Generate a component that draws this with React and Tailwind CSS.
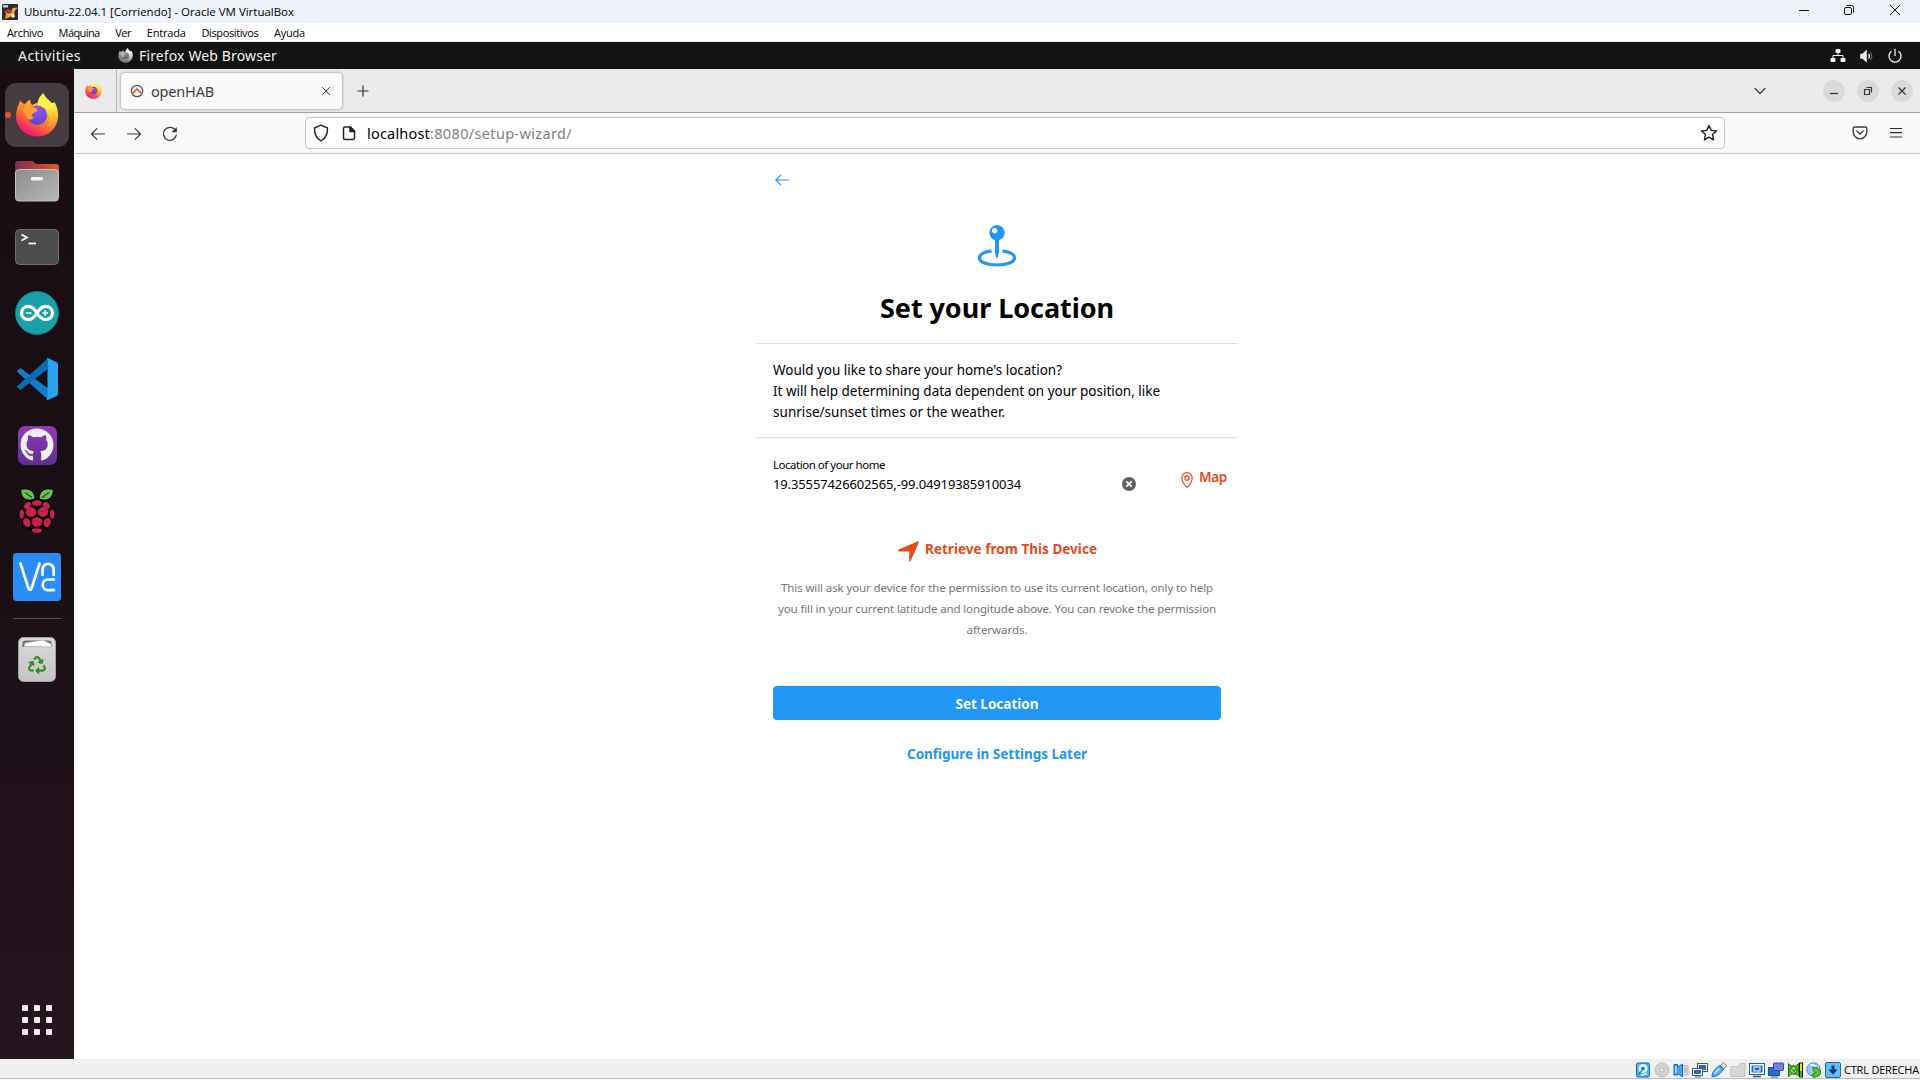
import { useLayoutEffect, useRef } from "react";
import { FaGithub, FaRecycle } from "react-icons/fa";

/* Single line of text whose tracking is adjusted so that it spans `w` pixels. */
function T({ w, className = "", children }) {
  const ref = useRef(null);
  useLayoutEffect(() => {
    const el = ref.current;
    el.style.letterSpacing = "0px";
    const natural = el.getBoundingClientRect().width;
    el.style.letterSpacing = `${(w - natural) / el.textContent.length}px`;
  }, [w, children]);
  return (
    <span ref={ref} className={`inline-block shrink-0 whitespace-nowrap ${className}`}>
      {children}
    </span>
  );
}

function Firefox({ id, className, mono }) {
  const c = mono
    ? ["#f2f2f2", "#b5b5b5", "#8a8a8a", "#777777", "#5c5c5c", "#8f8f8f"]
    : ["#fff04a", "#ffa030", "#ff5a3a", "#e8107a", "#5a45c8", "#9350f5"];
  return (
    <svg viewBox="0 0 42 44" className={className}>
      <defs>
        <linearGradient id={`${id}a`} x1="0.9" y1="0.1" x2="0.3" y2="0.98">
          <stop offset="0.05" stopColor={c[0]} />
          <stop offset="0.35" stopColor={c[1]} />
          <stop offset="0.68" stopColor={c[2]} />
          <stop offset="1" stopColor={c[3]} />
        </linearGradient>
        <radialGradient id={`${id}b`} cx="0.6" cy="0.2" r="0.85">
          <stop offset="0" stopColor={c[5]} />
          <stop offset="1" stopColor={c[4]} />
        </radialGradient>
        <linearGradient id={`${id}c`} x1="0.5" y1="0" x2="0.6" y2="1">
          <stop offset="0" stopColor={c[0]} />
          <stop offset="0.4" stopColor={c[0]} />
          <stop offset="0.9" stopColor={c[1]} />
        </linearGradient>
      </defs>
      <path
        d="M4.600 7 C5 9 6.500 10.500 9 11.200 C10 9.500 12 7.800 14.300 6.800 C14 9 14.600 10.600 16 12 L23 9 C30 9 35 12 38.500 9 C41 13 42 18 42 23 C42 35 32.500 43.500 21 43.500 C9 43.500 0 34.500 0 23 C0 17 2 12 4.600 7 Z"
        fill={`url(#${id}a)`}
      />
      <path
        d="M27.300 0 C29 4 32 6 35 9.300 C37 11.500 37.500 13 37.800 13.600 C38.400 12.500 38.500 11.500 38.300 10.500 C41 14 42 19 41.500 23 C40.500 29 36 33 31 34 C33 31 33.800 28 33 23 C32 17.500 27.500 15.500 22 12 C21 7 24 3 27.300 0 Z"
        fill={`url(#${id}c)`}
      />
      <circle cx="21.200" cy="22.300" r="9.800" fill={`url(#${id}b)`} />
      <path
        d="M6 17 C9 12.500 14 11.500 18 14 C20 16 22 16.200 21.400 17.500 C20.500 19.500 17.500 19.500 16 21.500 C15 23 16 24 18 24 C16.500 27 13 27.500 11 24.500 C9.500 22 8.500 19 6 17 Z"
        fill={c[1]}
      />
    </svg>
  );
}

function DockItem({ children, active }) {
  return (
    <div className="relative flex h-[66px] w-[74px] shrink-0 items-center justify-center">
      {active && <span className="absolute left-[5px] top-[30px] z-10 size-[6px] rounded-full bg-[#e95420]" />}
      {active ? (
        <div className="flex size-16 items-center justify-center rounded-[11px] bg-[#453b41]">{children}</div>
      ) : (
        children
      )}
    </div>
  );
}

function Files() {
  return (
    <svg viewBox="0 0 46 42" className="h-[42px] w-[46px]">
      <defs>
        <linearGradient id="fb" x1="0" x2="1">
          <stop offset="0" stopColor="#7b2f52" />
          <stop offset="1" stopColor="#e9541f" />
        </linearGradient>
        <linearGradient id="ff" x1="0" y1="0" x2="1" y2="1">
          <stop offset="0" stopColor="#8c8c8c" />
          <stop offset="1" stopColor="#b8b8b8" />
        </linearGradient>
      </defs>
      <path d="M1 14V4a3 3 0 0 1 3-3h14c2 0 2.500 3 5 3h19a3 3 0 0 1 3 3v8z" fill="url(#fb)" />
      <rect x="1.500" y="9.500" width="43" height="31.500" rx="3.500" fill="url(#ff)" stroke="#c2c2c2" />
      <rect x="17" y="17" width="12" height="3.500" rx="1.200" fill="#f4f4f4" />
    </svg>
  );
}

function Terminal() {
  return (
    <svg viewBox="0 0 46 38" className="h-[38px] w-[46px]">
      <rect x="1.500" y="1.500" width="43" height="35" rx="4" fill="#4c4c4c" stroke="#6e6e6e" />
      <path d="M7.500 6.500l5.500 3-5.500 3" fill="none" stroke="#fff" strokeWidth="1.700" />
      <path d="M14.500 15.500h7.500" stroke="#fff" strokeWidth="1.700" />
    </svg>
  );
}

function Arduino() {
  return (
    <svg viewBox="0 0 44 44" className="size-11">
      <circle cx="22" cy="22" r="21.500" fill="#1aa0a6" stroke="#0b8087" />
      <path
        d="M22 22C19 17 16.500 15.300 13.200 15.300a6.700 6.700 0 0 0 0 13.400C16.500 28.700 19 27 22 22C25 17 27.500 15.300 30.800 15.300a6.700 6.700 0 0 1 0 13.400C27.500 28.700 25 27 22 22Z"
        fill="none"
        stroke="#fff"
        strokeWidth="3.200"
      />
      <path d="M11 22h5.500M27.500 22h5.500M30.200 19.300v5.500" stroke="#fff" strokeWidth="1.700" />
    </svg>
  );
}

function VSCode() {
  return (
    <svg viewBox="0 0 100 100" className="size-[42px]">
      <path d="M1.500 31.500 8 25.500q2.500-2 5 0L100 90 75 98.500z" fill="#0f7fc8" />
      <path d="M1.500 68.500 8 74.500q2.500 2 5 0L75 27V1.500z" fill="#0a6cb4" />
      <path d="M71 99q3 2 6 .5l20-9.700q3-1.400 3-5V15.200q0-3.600-3-5L77 .5q-3-1.500-6 .5 4-1 4 4v90q0 5-4 4z" fill="#29a3ee" />
    </svg>
  );
}

function Raspberry() {
  const r = "#c7214c";
  return (
    <svg viewBox="0 0 40 48" className="h-12 w-10">
      <path d="M20 11C14 8 8 14 7 19c-5 3-5 9-2 13 0 6 5 10 9 12 3 3 9 3 12 0 4-2 9-6 9-12 3-4 3-10-2-13-1-5-7-11-13-8z" fill="#000" />
      <path d="M3.500 2.500C9 1 18 1.500 18 12 10 15 4 12 3.500 2.500zM36.500 2.500C31 1 22 1.500 22 12c8 3 14 0 14.500-9.500z" fill="#6cc04a" stroke="#000" />
      <path d="M8 5.500l7 5M32 5.500l-7 5" stroke="#1d4d12" strokeWidth="1.200" />
      <ellipse cx="20" cy="16" rx="5" ry="3" fill={r} />
      <ellipse cx="10.500" cy="18.500" rx="3" ry="4" fill={r} transform="rotate(35 10.500 18.500)" />
      <ellipse cx="29.500" cy="18.500" rx="3" ry="4" fill={r} transform="rotate(-35 29.500 18.500)" />
      <ellipse cx="14" cy="25" rx="5.200" ry="5" fill={r} />
      <ellipse cx="26" cy="25" rx="5.200" ry="5" fill={r} />
      <ellipse cx="4.800" cy="27" rx="2.200" ry="4.500" fill={r} />
      <ellipse cx="35.200" cy="27" rx="2.200" ry="4.500" fill={r} />
      <ellipse cx="20" cy="35" rx="5.300" ry="4.800" fill={r} />
      <ellipse cx="9.800" cy="35.500" rx="3.500" ry="4.700" fill={r} transform="rotate(-25 9.800 35.500)" />
      <ellipse cx="30.200" cy="35.500" rx="3.500" ry="4.700" fill={r} transform="rotate(25 30.200 35.500)" />
      <ellipse cx="20" cy="43.500" rx="5" ry="2.300" fill={r} />
    </svg>
  );
}

function Vnc() {
  return (
    <svg viewBox="0 0 48 48" className="size-12">
      <rect width="48" height="48" rx="3.500" fill="#2a8df5" />
      <path
        d="M7.500 10.500 15.500 35.500q1.500 3 3 0L26.500 10.500M29.500 22v-5.500a5.600 5.600 0 0 1 11.200 0V22M41 26.500h-6a5.300 5.300 0 0 0 0 10.600h6"
        fill="none"
        stroke="#fff"
        strokeWidth="2.700"
        strokeLinecap="round"
      />
    </svg>
  );
}

function Trash() {
  return (
    <div className="relative h-[45px] w-[38px]">
      <svg viewBox="0 0 38 45" className="size-full">
        <defs>
          <linearGradient id="tr" x1="0" y1="0" x2="0" y2="1">
            <stop offset="0" stopColor="#dadada" />
            <stop offset="1" stopColor="#c4c4c4" />
          </linearGradient>
        </defs>
        <rect x="0.500" y="0.500" width="37" height="44" rx="5" fill="url(#tr)" stroke="#a2a2a2" />
        <path d="M4.500 10V6q0-2.500 3-2.500h23q3 0 3 2.500v4z" fill="#707070" />
        <path d="M6 9.500l1-3.500 18-3 8 4v3z" fill="#fff" stroke="#aaa" strokeWidth="0.600" />
      </svg>
      <FaRecycle className="absolute left-[10px] top-[19px] size-[18px] text-[#2d9127]" />
    </div>
  );
}

function Dock() {
  return (
    <aside className="flex w-[74px] shrink-0 flex-col items-center bg-linear-to-b from-[#190d13] via-[#1b0f16] to-[#26141e] pt-[13px]">
      <DockItem active>
        <Firefox id="dk" className="h-[44px] w-[42px]" />
      </DockItem>
      <DockItem><Files /></DockItem>
      <DockItem><Terminal /></DockItem>
      <DockItem><Arduino /></DockItem>
      <DockItem><VSCode /></DockItem>
      <DockItem>
        <div className="flex size-[39px] items-center justify-center rounded-[7px] bg-linear-to-b from-[#9239b5] to-[#5e2f92]">
          <FaGithub className="size-[34px] text-[#f0eef5]" />
        </div>
      </DockItem>
      <DockItem><Raspberry /></DockItem>
      <DockItem><Vnc /></DockItem>
      <div className="mt-2 mb-[7px] h-px w-12 shrink-0 bg-[#5c5157]" />
      <DockItem><Trash /></DockItem>
      <div className="mt-auto mb-6 grid grid-cols-3 gap-[6px]">
        {Array.from({ length: 9 }, (_, i) => (
          <span key={i} className="size-[6px] rounded-[1px] bg-[#f0efed]" />
        ))}
      </div>
    </aside>
  );
}

function TitleBar() {
  return (
    <div className="flex h-[23px] shrink-0 items-center bg-[#eef3fa] text-black">
      <svg viewBox="0 0 16 16" className="ml-[2px] size-4">
        <rect width="16" height="16" rx="1" fill="#2d2b33" />
        <path d="M3 6.500l3 3 3-1 1.500-4.500 5.500-.5-3 3-1.500 4.500-3.500 2-5 2 1-5z" fill="#f3a33a" />
        <path d="M3.500 6l3 3 3-2.500-2-1z" fill="#d6401f" />
        <path d="M1 1h5v2.500H1z" fill="#c9c9cf" />
        <path d="M9 11l3-2 1 4-3 1z" fill="#fbe3b5" />
      </svg>
      <T w={270} className="ml-[6px] font-['Open_Sans',sans-serif] text-[11.5px] leading-[16px]">
        Ubuntu-22.04.1 [Corriendo] - Oracle VM VirtualBox
      </T>
      <div className="mt-[-3px] ml-auto flex items-center">
        <svg viewBox="0 0 12 12" className="mr-[33px] size-3" stroke="#111" fill="none"><path d="M1 6.500h10" /></svg>
        <svg viewBox="0 0 12 12" className="mr-[34px] size-3" stroke="#111" fill="none">
          <rect x="1.500" y="3.500" width="7" height="7" rx="1.500" />
          <path d="M3.500 1.500h5a2 2 0 0 1 2 2v5" />
        </svg>
        <svg viewBox="0 0 12 12" className="mr-[19px] size-3" stroke="#111" fill="none"><path d="M1 1l10 10M11 1L1 11" /></svg>
      </div>
    </div>
  );
}

const menus = [
  ["Archivo", 36],
  ["Máquina", 41],
  ["Ver", 16],
  ["Entrada", 39],
  ["Dispositivos", 57],
  ["Ayuda", 31],
];

function MenuBar() {
  return (
    <div className="flex h-[19px] shrink-0 items-center gap-[15.600px] border-b border-[#efefef] bg-white pt-[2px] pl-[7px] font-['Open_Sans',sans-serif] text-[11px] leading-4 text-black">
      {menus.map(([label, w]) => (
        <T key={label} w={w}>{label}</T>
      ))}
    </div>
  );
}

function GnomeBar() {
  return (
    <div className="flex h-[27px] shrink-0 items-center bg-[#131313] text-[14px] leading-5 text-[#f2f2f2]">
      <T w={63} className="ml-[18px]">Activities</T>
      <Firefox id="gb" mono className="ml-[37px] size-[15px]" />
      <T w={138} className="ml-[6px]">Firefox Web Browser</T>
      <div className="ml-auto flex items-center">
        <svg viewBox="0 0 16 16" className="mr-[13px] size-4" fill="#f2f2f2">
          <rect x="5.500" y="1" width="5" height="4" rx="1" />
          <rect x="0.500" y="10" width="5" height="4" rx="1" />
          <rect x="10.500" y="10" width="5" height="4" rx="1" />
          <path d="M3 10V7.500h10V10M8 5v2.500" fill="none" stroke="#f2f2f2" />
        </svg>
        <svg viewBox="0 0 16 16" className="mr-[12px] size-4" fill="none" stroke="#f2f2f2">
          <path d="M1.500 6h2L7.500 2v12L3.500 10.500h-2z" fill="#f2f2f2" strokeWidth="0.600" />
          <path d="M9.500 6q1.800 2.200 0 4.500" strokeWidth="1.300" />
          <path d="M11.500 4.500q3 3.700 0 7.500" stroke="#777" />
        </svg>
        <svg viewBox="0 0 16 16" className="mr-[17px] size-4" fill="none" stroke="#f2f2f2" strokeWidth="1.300">
          <path d="M4.500 3.200a6 6 0 1 0 7 0M8 1v7" />
        </svg>
      </div>
    </div>
  );
}

function TabStrip() {
  return (
    <div className="flex h-11 shrink-0 items-center border-b border-[#a3a3a3] bg-[#ebebeb]">
      <div className="flex h-full w-[43px] items-center justify-center border-r border-[#b5b5b5]">
        <Firefox id="tb" className="-ml-[3px] size-[17px]" />
      </div>
      <div className="ml-1 flex h-9 w-[221px] items-center rounded-[4px] bg-[#fafafa] shadow-[0_0_3px_rgba(0,0,0,0.45)]">
        <svg viewBox="0 0 14 14" className="ml-[9px] size-[14px]" fill="none">
          <circle cx="7" cy="7" r="5.700" stroke="#4b5563" strokeWidth="1.200" />
          <path d="M2.500 9.500L7 5l4.500 4.500" stroke="#e64a19" strokeWidth="1.500" />
        </svg>
        <T w={63} className="ml-[7px] text-[14.5px] leading-5 text-[#3c3c3c]">openHAB</T>
        <svg viewBox="0 0 10 10" className="mr-[11px] ml-auto size-[10px]" stroke="#333" fill="none"><path d="M1.200 1.200l7.600 7.600M8.800 1.200l-7.600 7.600" /></svg>
      </div>
      <svg viewBox="0 0 12 12" className="mt-px ml-[15px] size-3" stroke="#333" fill="none"><path d="M6 .5v11M.5 6h11" strokeWidth="1.200" /></svg>
      <svg viewBox="0 0 12 8" className="mr-[57px] ml-auto h-2 w-3" stroke="#444" fill="none"><path d="M.5 1L6 6.500 11.500 1" strokeWidth="1.400" /></svg>
      <div className="mr-[7px] flex gap-3">
        {["M3 9.500h8", "M3.500 5.500h5v5h-5zM5.500 3.500h5v5", "M3.500 3.500l7 7M10.500 3.500l-7 7"].map((d, i) => (
          <span key={i} className="flex size-[22px] items-center justify-center rounded-full bg-[#dadada]">
            <svg viewBox="0 0 14 14" className="size-[14px]" fill="none" stroke="#333"><path d={d} strokeWidth="1.200" /></svg>
          </span>
        ))}
      </div>
    </div>
  );
}

function NavBar() {
  return (
    <div className="flex h-[41px] shrink-0 items-center border-b border-[#c9c9cb] bg-[#f9f9fb] text-[#3a3a3a]">
      <svg viewBox="0 0 16 16" className="mt-px ml-4 size-4" fill="none" stroke="currentColor" strokeWidth="1.200" strokeLinecap="round" strokeLinejoin="round"><path d="M14.500 8H1.500M6.800 2.700L1.500 8l5.300 5.300" /></svg>
      <svg viewBox="0 0 16 16" className="mt-px ml-5 size-4" fill="none" stroke="currentColor" strokeWidth="1.200" strokeLinecap="round" strokeLinejoin="round"><path d="M1.500 8h13M9.200 2.700L14.500 8l-5.300 5.300" /></svg>
      <svg viewBox="0 0 16 16" className="mt-px ml-5 size-4" fill="none" stroke="currentColor" strokeWidth="1.300" strokeLinecap="round">
        <path d="M14.300 9.200A6.500 6.500 0 1 1 12.800 3.500" />
        <path d="M14.800 1v5.200H9.600z" fill="currentColor" stroke="none" />
      </svg>
      <div className="ml-[127px] flex h-8 w-[1420px] items-center rounded-[4px] border border-[#c4c4c6] bg-white text-[#222]">
        <svg viewBox="0 0 16 18" className="ml-[7px] h-[18px] w-4" fill="none" stroke="currentColor" strokeWidth="1.400" strokeLinejoin="round">
          <path d="M8 1.200L1.500 4C1.300 10 3.500 14.500 8 16.800 12.500 14.500 14.700 10 14.500 4z" />
        </svg>
        <svg viewBox="0 0 14 16" className="ml-[13px] h-4 w-[14px]" fill="none" stroke="currentColor" strokeWidth="1.500" strokeLinejoin="round">
          <path d="M3 2h5.500L12.500 6v7a1.500 1.500 0 0 1-1.500 1.500H3A1.500 1.500 0 0 1 1.500 13V3.500A1.500 1.500 0 0 1 3 2z" />
          <path d="M8 2v4.500h4.500z" fill="currentColor" />
        </svg>
        <div className="ml-[11px] flex text-[14.5px] leading-5">
          <T w={63} className="text-black">localhost</T>
          <T w={142} className="text-[#808080]">:8080/setup-wizard/</T>
        </div>
        <svg viewBox="0 0 18 18" className="mr-[6px] ml-auto size-[18px]" fill="none" stroke="currentColor" strokeWidth="1.400" strokeLinejoin="round">
          <path d="M9 1.500l2.200 4.900 5.300.6-4 3.600 1.100 5.300L9 13.200l-4.600 2.700 1.100-5.300-4-3.600 5.300-.6z" />
        </svg>
      </div>
      <svg viewBox="0 0 16 14" className="mr-[22px] ml-auto h-[14px] w-4" fill="none" stroke="currentColor" strokeWidth="1.300" strokeLinecap="round" strokeLinejoin="round">
        <path d="M2.500 1h11a1.300 1.300 0 0 1 1.300 1.300V6a6.800 6.800 0 0 1-13.600 0V2.300A1.300 1.300 0 0 1 2.500 1z" />
        <path d="M4.800 5L8 8l3.200-3" />
      </svg>
      <svg viewBox="0 0 12 12" className="mr-[18px] size-3" stroke="#333" strokeWidth="1.200"><path d="M0 1.500h12M0 5.700h12M0 10h12" /></svg>
    </div>
  );
}

function Wizard() {
  return (
    <main className="flex flex-1 justify-center bg-white text-black">
      <div className="flex w-[480px] flex-col">
        <div className="flex h-[50px] shrink-0 items-center pl-[18px]">
          <svg viewBox="0 0 14 12" className="mt-px h-3 w-[14px]" fill="none" stroke="#2196f3" strokeWidth="1.200"><path d="M14 6H1M6.200 .6L.8 6l5.400 5.400" /></svg>
        </div>
        <div className="mt-[21px] flex h-[42px] shrink-0 justify-center">
          <svg viewBox="0 0 40 42" className="h-[42px] w-10" fill="#2196f3">
            <path fillRule="evenodd" d="M20 0a7.800 7.800 0 0 1 2 15.300v12Q21.500 31 20 34q-1.500-3-2-6.700v-12A7.800 7.800 0 0 1 20 0zM17.700 3a2.700 2.700 0 1 0 .01 0z" />
            <path d="M14.500 25.800C7.500 26.800 2.500 29.500 2.500 33c0 4 7.500 7 17.500 7s17.500-3 17.500-7c0-3.500-5-6.200-12-7.200" fill="none" stroke="#2196f3" strokeWidth="3.200" />
          </svg>
        </div>
        <div className="flex h-[77px] shrink-0 justify-center border-b border-[#dcdcdc] pt-[23px]">
          <T w={234} className="h-9 text-[27px] leading-9 font-bold">Set your Location</T>
        </div>
        <div className="flex h-[94px] shrink-0 flex-col items-start border-b border-[#dcdcdc] pt-4 pl-4 text-[13.5px] leading-[21px]">
          <T w={289}>Would you like to share your home's location?</T>
          <T w={387}>It will help determining data dependent on your position, like</T>
          <T w={232}>sunrise/sunset times or the weather.</T>
        </div>
        <div className="flex h-[101px] shrink-0 pl-4">
          <div className="flex w-[349px] flex-col items-start pt-[18px]">
            <T w={112} className="text-[11.5px] leading-[18px]">Location of your home</T>
            <T w={248} className="text-[13px] leading-5">19.35557426602565,-99.04919385910034</T>
          </div>
          <svg viewBox="0 0 14 14" className="mt-[39px] size-[14px]">
            <circle cx="7" cy="7" r="7" fill="#616161" />
            <path d="M4.300 4.300l5.400 5.400M9.700 4.300l-5.400 5.400" stroke="#fff" strokeWidth="1.800" />
          </svg>
          <div className="mt-[29px] ml-[45px] flex h-[21px] items-center text-[#e64a19]">
            <svg viewBox="0 0 12 16" className="mt-[4px] h-4 w-3" fill="none" stroke="currentColor">
              <path d="M6 .7a5.200 5.200 0 0 1 5.200 5.200C11.200 9.500 8 13.500 6 15.300 4 13.500.8 9.500.8 5.900A5.200 5.200 0 0 1 6 .7z" strokeWidth="1.200" />
              <circle cx="6" cy="5.900" r="2.200" strokeWidth="1.200" />
            </svg>
            <T w={28} className="ml-[6px] text-[13.5px] leading-[21px] font-semibold">Map</T>
          </div>
        </div>
        <div className="flex h-[21px] shrink-0 items-center justify-center text-[#e64a19]">
          <svg viewBox="0 0 21 21" className="mt-[3px] ml-px size-[21px]" fill="currentColor"><path d="M19.800.3a.8.800 0 0 1 1 1L12.800 19.800c-.5 1-1.600.8-1.600-.3V10.500H1.200C0 10.500-.3 9 .8 8.500z" /></svg>
          <T w={172} className="ml-[6px] text-[13.5px] font-bold">Retrieve from This Device</T>
        </div>
        <div className="mt-[17px] flex shrink-0 flex-col items-center text-[11.5px] leading-[21px] text-[#757575]">
          <T w={432}>This will ask your device for the permission to use its current location, only to help</T>
          <T w={438}>you fill in your current latitude and longitude above. You can revoke the permission</T>
          <T w={61}>afterwards.</T>
        </div>
        <button className="mx-4 mt-[46px] flex h-[34px] shrink-0 items-center justify-center rounded-[4px] bg-[#2196f3] pt-[2px] text-white">
          <T w={83} className="text-[13.500px] leading-[21px] font-bold">Set Location</T>
        </button>
        <div className="mt-6 flex justify-center">
          <T w={180} className="text-[13.500px] leading-[21px] font-bold text-[#2196f3]">Configure in Settings Later</T>
        </div>
      </div>
    </main>
  );
}

const statusIcons = [
  <>
    <rect x="1.500" y="1" width="13" height="14" rx="1.500" fill="#4ab0f5" stroke="#1565b8" />
    <circle cx="8" cy="6.500" r="4.600" fill="#e3f5ff" />
    <circle cx="8" cy="6.500" r="1.800" fill="#1976d2" />
    <path d="M6 13.500l6-2" stroke="#e3f5ff" strokeWidth="1.500" />
    <path d="M3.500 12.500l4-5" stroke="#1565b8" strokeWidth="1.200" />
  </>,
  <>
    <circle cx="8" cy="8" r="7" fill="#d2d2d2" stroke="#c0c0c0" />
    <circle cx="8" cy="8" r="2" fill="#f0f0f0" stroke="#b5b5b5" />
  </>,
  <>
    <path d="M9 3.500h6v9.500H9z" fill="#dcdcdc" stroke="#b5b5b5" />
    <path d="M1 2.500h3.500v2.500L9.500 2v13L4.500 11.500V13H1z" fill="#3ba5ee" stroke="#1669b9" />
    <path d="M2.800 4v7.500" stroke="#a4dcff" strokeWidth="1.500" />
    <path d="M11 6h3M11 8h3M11 10h3" stroke="#aaa" />
  </>,
  <>
    <rect x="5.500" y="1.500" width="10" height="8" fill="#fff" stroke="#555" />
    <rect x="7" y="3" width="7" height="5" fill="#1f6fd0" />
    <rect x="0.500" y="6.500" width="10" height="7" fill="#fff" stroke="#555" />
    <rect x="2" y="8" width="7" height="4" fill="#1f6fd0" />
    <path d="M3 15h6" stroke="#666" />
  </>,
  <>
    <path d="M9.500 3.500L12.500.8l3 3-2.500 3z" fill="#eee" stroke="#777" />
    <path d="M1 14.500C1 10 5 6 8.500 3.500l4 3.800C10 11 6 15 1 14.500z" fill="#4db3f5" stroke="#1669b9" />
    <path d="M3.500 11.500L8.500 6.500" stroke="#c5ebff" strokeWidth="1.500" />
  </>,
  <path d="M1 14.500V4.500h8l1.500-3h4.500v13z" fill="#d8d8d8" stroke="#c1c1c1" />,
  <>
    <rect x="0.500" y="1.500" width="15" height="11" fill="#fff" stroke="#1c5fae" />
    <rect x="2.500" y="3.500" width="11" height="7" fill="#1f6fd0" />
    <rect x="5" y="5" width="6" height="4" fill="#1f6fd0" stroke="#fff" />
    <path d="M4 14.500h8" stroke="#555" strokeWidth="1.500" />
  </>,
  <>
    <rect x="0.500" y="5.500" width="11" height="8" fill="#1f6fd0" stroke="#1a4fa0" />
    <rect x="5.500" y="1" width="10" height="7.500" rx="1" fill="#6c86e8" stroke="#2c45a8" />
    <path d="M3 15h7" stroke="#555" />
  </>,
  <>
    <path d="M1.500 1.500L4 4h5l2.500-2.500v12L9 12H4l-2.500 3z" fill="#5cc832" stroke="#23721a" />
    <circle cx="6.500" cy="8" r="3.600" fill="#7ee04d" stroke="#23721a" />
    <path d="M4.500 6.500l2.500 3 2-3" stroke="#23721a" fill="none" />
    <rect x="12.500" y="1" width="3" height="14" fill="#ffe100" stroke="#111" />
    <path d="M14 9v5.500" stroke="#28b428" strokeWidth="2" />
  </>,
  <>
    <circle cx="7.500" cy="7.500" r="6.700" fill="#8ccdf6" stroke="#4a90c0" />
    <path d="M4 3q4-1 6 2" stroke="#fff" strokeWidth="1.500" fill="none" />
    <path d="M7 5.500h3.500L14.500 9q1 3-2 5L7.500 15.500l-1.500-3 3.500-1.500L7 8.500z" fill="#58c02e" stroke="#247a1a" />
  </>,
  <>
    <rect x="0.500" y="0.500" width="15" height="15" rx="1.500" fill="#5fbdf7" stroke="#1b66ad" />
    <path d="M8 3.500v4" stroke="#0a2f66" strokeWidth="3" />
    <path d="M3.500 7.500h9L8 12.500z" fill="#0a2f66" />
  </>,
];

function StatusBar() {
  return (
    <div className="flex h-[21px] shrink-0 flex-col bg-[#f7f7f7]">
      <div className="flex h-5 items-center justify-end gap-[3px] border-b border-[#bdbdbd] bg-[#f0f0f0]">
        {statusIcons.map((icon, i) => (
          <svg key={i} viewBox="0 0 16 16" className="mt-[2px] size-4">{icon}</svg>
        ))}
        <T w={75} className="mt-[2px] mr-px font-['Open_Sans',sans-serif] text-[11px] leading-4 text-black">CTRL DERECHA</T>
      </div>
    </div>
  );
}

export default function App() {
  return (
    <div className="flex h-[1080px] w-[1920px] flex-col overflow-hidden bg-white font-['Noto_Sans',sans-serif]">
      <TitleBar />
      <MenuBar />
      <GnomeBar />
      <div className="flex min-h-0 flex-1">
        <Dock />
        <div className="flex min-w-0 flex-1 flex-col">
          <TabStrip />
          <NavBar />
          <Wizard />
        </div>
      </div>
      <StatusBar />
    </div>
  );
}
